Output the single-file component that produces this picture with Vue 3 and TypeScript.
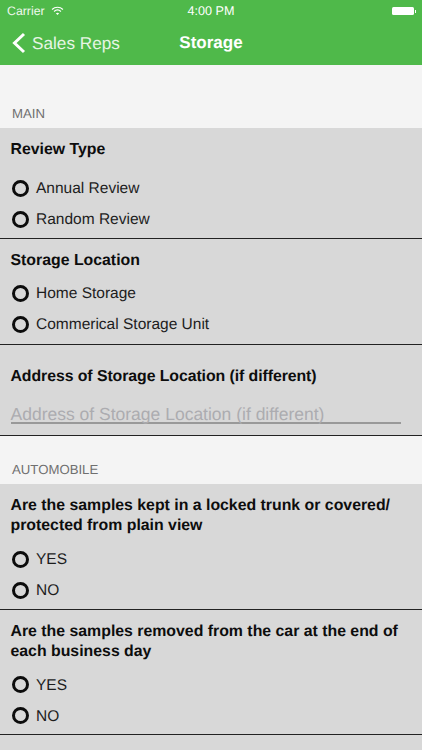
<script setup lang="ts">
interface Field { title: string[]; options: string[]; cls: string }
const main: Field[] = [
  { title: ['Review Type'], options: ['Annual Review', 'Random Review'], cls: 'f1' },
  { title: ['Storage Location'], options: ['Home Storage', 'Commerical Storage Unit'], cls: 'f2' },
]
const auto: Field[] = [
  { title: ['Are the samples kept in a locked trunk or covered/', 'protected from plain view'], options: ['YES', 'NO'], cls: 'f3' },
  { title: ['Are the samples removed from the car at the end of', 'each business day'], options: ['YES', 'NO'], cls: 'f3' },
]
</script>

<template>
  <div class="screen">
    <header class="top">
      <div class="status">
        <div class="st-left">
          <span>Carrier</span>
          <svg width="13" height="10" viewBox="0 0 14 11" fill="none" stroke="#fff">
            <path d="M1 3.8C4.4.6 9.6.6 13 3.8" stroke-width="1.3" />
            <path d="M3.2 6C5.4 4 8.6 4 10.8 6" stroke-width="1.3" />
            <path d="M7 10 5.2 8C6.2 7.2 7.8 7.2 8.8 8Z" fill="#fff" stroke="none" />
          </svg>
        </div>
        <span class="st-time">4:00 PM</span>
        <div class="battery"><i></i><b></b></div>
      </div>
      <div class="nav">
        <div class="back">
          <svg width="15" height="22" viewBox="0 0 15 22" fill="none" stroke="#fff" stroke-width="3">
            <path d="M13 2 3.5 11 13 20" />
          </svg>
          <span>Sales Reps</span>
        </div>
        <span class="title">Storage</span>
      </div>
    </header>

    <div class="sec-label first">MAIN</div>
    <section v-for="f in main" :key="f.title[0]" class="field" :class="f.cls">
      <div class="q"><div v-for="l in f.title" :key="l">{{ l }}</div></div>
      <div v-for="o in f.options" :key="o" class="opt"><span class="radio"></span><span class="lbl">{{ o }}</span></div>
    </section>
    <section class="field addr">
      <div class="q">Address of Storage Location (if different)</div>
      <div class="input">Address of Storage Location (if different)</div>
    </section>

    <div class="sec-label second">AUTOMOBILE</div>
    <section v-for="f in auto" :key="f.title[0]" class="field" :class="f.cls">
      <div class="q"><div v-for="l in f.title" :key="l">{{ l }}</div></div>
      <div v-for="o in f.options" :key="o" class="opt"><span class="radio"></span><span class="lbl">{{ o }}</span></div>
    </section>
    <div class="rest"></div>
  </div>
</template>

<style>
html, body { margin: 0; padding: 0; overflow: hidden; }
</style>

<style scoped>
.screen {
  width: 422px;
  height: 750px;
  overflow: hidden;
  background: #f4f4f4;
  font-family: "Liberation Sans", Arial, sans-serif;
  color: #111;
  text-rendering: geometricPrecision;
}
.top { height: 65px; background: #4fb94a; color: #fff; display: flex; flex-direction: column; }
.status {
  height: 22px;
  padding: 0 6px 0 7px;
  display: flex;
  align-items: center;
  position: relative;
  font-size: 12.3px;
}
.st-left { display: flex; align-items: center; gap: 6px; color: #eef8ed; }
.st-time { position: absolute; left: 0; right: 0; text-align: center; font-size: 12.6px; }
.battery { margin-left: auto; display: flex; align-items: center; }
.battery i { display: block; width: 22px; height: 8px; background: #fff; border-radius: 1.5px; }
.battery b { display: block; width: 1.5px; height: 3px; margin-left: 1px; background: #fff; }
.nav { flex: 1; display: flex; align-items: center; position: relative; padding-bottom: 1px; }
.back { display: flex; align-items: center; gap: 6px; padding-left: 11px; font-size: 17.2px; color: #e6f5e4; }
.title { position: absolute; left: 0; right: 0; text-align: center; font-size: 17px; font-weight: 700; }
.sec-label { color: #6f6f6f; font-size: 13.2px; padding-left: 12px; line-height: 16px; }
.first { padding-top: 41px; height: 22px; }
.second { padding-top: 26px; height: 22px; }
.field { background: #d8d8d8; border-bottom: 1px solid #222; padding: 0 10.5px; box-sizing: border-box; }
.q { font-weight: 700; font-size: 15.85px; line-height: 20px; color: #0d0d0d; }
.opt { display: flex; align-items: center; gap: 7px; font-size: 15.5px; color: #1d1d1d; height: 30.7px; padding-left: 1.5px; }
.lbl { padding-top: 2px; }
.radio { width: 17px; height: 17px; box-sizing: border-box; border: 3.8px solid #0c0c0c; border-radius: 50%; }
.f1 { height: 111px; padding-top: 12px; }
.f1 .q { margin-bottom: 13px; }
.f2 { height: 106px; padding-top: 12px; }
.f2 .q { margin-bottom: 7px; }
.addr { height: 91px; padding-top: 22px; }
.addr .q { letter-spacing: -0.07px; }
.input {
  margin-top: 17px;
  width: 390px;
  height: 18px;
  line-height: 20px;
  font-size: 17.5px;
  color: #acacb0;
  border-bottom: 2px solid #999;
  white-space: nowrap;
}
.f3 { height: 125.5px; padding-top: 12px; }
.f3 .q { margin-bottom: 8px; }
.rest { background: #d8d8d8; height: 40px; }
</style>
